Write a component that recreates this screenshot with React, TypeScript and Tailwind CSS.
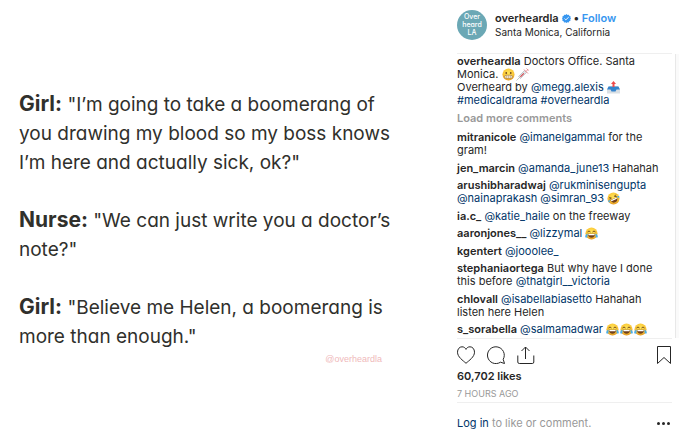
import type { ReactNode } from "react";

type EmojiKind = "grimace" | "rofl" | "joy" | "syringe" | "outbox";

const emojiLabels: Record<EmojiKind, string> = {
  grimace: "Grimacing face",
  rofl: "Rolling on the floor laughing",
  joy: "Face with tears of joy",
  syringe: "Syringe",
  outbox: "Outbox tray",
};

function Emoji({ kind }: { kind: EmojiKind }) {
  return (
    <svg viewBox="0 0 26 26" role="img" aria-label={emojiLabels[kind]} className="mr-px inline-block h-[13px] w-[13px] align-text-bottom">
      {(kind === "grimace" || kind === "rofl" || kind === "joy") && (
        <>
          <defs>
            <radialGradient id="face" cx="50%" cy="38%" r="62%">
              <stop offset="0" stopColor="#ffe45c" />
              <stop offset="0.65" stopColor="#fbc937" />
              <stop offset="1" stopColor="#e29420" />
            </radialGradient>
          </defs>
          <circle cx="13" cy="13" r="12" fill="url(#face)" />
        </>
      )}
      {kind === "grimace" && (
        <>
          <ellipse cx="8.5" cy="10" rx="1.7" ry="2.2" fill="#6b431a" />
          <ellipse cx="17.5" cy="10" rx="1.7" ry="2.2" fill="#6b431a" />
          <rect x="5" y="14.5" width="16" height="6" rx="3" fill="#fff" stroke="#9a6a22" strokeWidth="1.2" />
          <path d="M5 17.5h16M9 14.5v6M13 14.5v6M17 14.5v6" stroke="#b48a4a" strokeWidth="0.8" />
        </>
      )}
      {kind === "joy" && (
        <>
          <path d="M5 10q3-4 6 0M15 10q3-4 6 0" fill="none" stroke="#6b431a" strokeWidth="1.8" />
          <path d="M5.5 13.5h15q-1 8-7.500 8t-7.500-8z" fill="#71401c" />
          <path d="M6.500 14h13l-.6 2.500h-11.800z" fill="#fff" />
          <path d="M5 13c-4 2-5 5-4.500 7s4 2 4.500-1zM21 13c4 2 5 5 4.500 7s-4 2-4.500-1z" fill="#4caee8" />
        </>
      )}
      {kind === "rofl" && (
        <g transform="rotate(-25 13 13)">
          <path d="M5.500 8l4 2-4 2M20.500 8l-4 2 4 2" fill="none" stroke="#6b431a" strokeWidth="1.700" />
          <path d="M5.500 13.500h15q-1 8-7.500 8t-7.500-8z" fill="#71401c" />
          <path d="M6.500 14h13l-.6 2.500h-11.800z" fill="#fff" />
          <path d="M4.500 12c-3 0-4 2-3.500 3.500s3 1 3.500-1zM21.500 12c3 0 4 2 3.500 3.500s-3 1-3.500-1z" fill="#4caee8" />
        </g>
      )}
      {kind === "syringe" && (
        <>
          <path d="M1 25l7-7" stroke="#a2a8ad" strokeWidth="1.300" />
          <path d="M5 17L17 5l4 4L9 21z" fill="#dfe4e7" stroke="#9ba3a8" />
          <path d="M8 17l7-7 1.500 1.500-7 7z" fill="#d8434b" />
          <path d="M16 3l8 8M20 7l4-4M21 1l4 4" stroke="#e2757a" strokeWidth="1.600" />
        </>
      )}
      {kind === "outbox" && (
        <>
          <path d="M4 10h18l4 8v7H0v-7z" fill="#d9dfe4" />
          <path d="M3 11h20l3 6h-7l-2 4H9l-2-4H0z" fill="#3484cd" />
          <path d="M13 0l5 6h-3v6h-4V6H8z" fill="#ef4b4b" />
        </>
      )}
    </svg>
  );
}

function User({ children }: { children: ReactNode }) {
  return <a href="#user" className="font-semibold text-[#262626]">{children}</a>;
}

function Tag({ children }: { children: ReactNode }) {
  return <a href="#tag" className="text-[#003569]">{children}</a>;
}

function Speaker({ children }: { children: ReactNode }) {
  return <b className="text-[21px] leading-none font-bold">{children}</b>;
}

function Quote() {
  return (
    <main className="min-w-0 pt-[90px] pl-[19px] text-[19px] leading-[29px] text-[#30302c] [font-feature-settings:'cv11']">
      <p>
        <Speaker>Girl:</Speaker> "I’m going to take a boomerang of<br />
        you drawing my blood so my boss knows<br />
        I’m here and actually sick, ok?"
      </p>
      <p className="mt-[29px]">
        <Speaker>Nurse:</Speaker> "We can just write you a doctor’s<br />
        note?"
      </p>
      <p className="mt-[29px]">
        <Speaker>Girl:</Speaker> "Believe me Helen, a boomerang is<br />
        more than enough."
      </p>
      <p className="pr-[75px] text-right font-['Liberation_Sans_Narrow','Liberation_Sans',sans-serif] text-[9px] leading-4 text-[#efb9bb]">@overheardla</p>
    </main>
  );
}

function Header() {
  return (
    <header className="mr-[7px] flex h-[54px] gap-2 border-b border-[#efefef] pt-[10px]">
      <a href="#profile" aria-label="overheardla profile" className="flex h-[30px] w-[30px] flex-col items-center justify-center rounded-full bg-[#6ba8b5] text-[7px] leading-[8px] font-medium text-white [font-feature-settings:'cv11']">
        <span>Over</span>
        <span>heard</span>
        <span>LA</span>
      </a>
      <div className="pt-px">
        <div className="flex h-[14px] items-center text-[11px]">
          <a href="#profile" className="font-semibold">overheardla</a>
          <svg viewBox="0 0 20 20" role="img" aria-label="Verified" className="ml-[3px] h-[9px] w-[9px]">
            <path d="M10 0l2.400 2 3-.6 1 2.900 2.900 1-.6 3L20 10l-1.700 2.100.6 3-2.900 1-1 2.900-3-.6L10 20l-2.400-1.600-3 .6-1-2.900-2.900-1 .6-3L0 10l1.300-1.700-.6-3 2.900-1 1-2.900 3 .6z" fill="#3897f0" />
            <path d="M5.500 10l3 3L15 7" fill="none" stroke="#fff" strokeWidth="2" />
          </svg>
          <span className="mx-[3px] font-bold">•</span>
          <button type="button" className="font-semibold text-[#3897f0]">Follow</button>
        </div>
        <a href="#location" className="block text-[10px] leading-[14px]">Santa Monica, California</a>
      </div>
    </header>
  );
}

function Comments() {
  return (
    <section aria-label="Comments" className="flex h-[284px]">
      <div className="min-w-0 flex-1 pt-px">
        <p>
          <User>overheardla</User> Doctors Office. Santa<br />
          Monica. <Emoji kind="grimace" /><Emoji kind="syringe" /><br />
          Overheard by <Tag>@megg.alexis</Tag> <Emoji kind="outbox" /><br />
          <Tag>#medicaldrama</Tag> <Tag>#overheardla</Tag>
        </p>
        <button type="button" className="mt-[5px] block font-semibold text-[#999]">Load more comments</button>
        <ul className="mt-[6px] flex h-[205px] flex-col justify-between">
          <li><User>mitranicole</User> <Tag>@imanelgammal</Tag> for the<br />gram!</li>
          <li><User>jen_marcin</User> <Tag>@amanda_june13</Tag> Hahahah</li>
          <li><User>arushibharadwaj</User> <Tag>@rukminisengupta</Tag><br /><Tag>@nainaprakash</Tag> <Tag>@simran_93</Tag> <Emoji kind="rofl" /></li>
          <li><User>ia.c_</User> <Tag>@katie_haile</Tag> on the freeway</li>
          <li><User>aaronjones__</User> <Tag>@lizzymal</Tag> <Emoji kind="joy" /></li>
          <li><User>kgentert</User> <Tag>@jooolee_</Tag></li>
          <li><User>stephaniaortega</User> But why have I done<br />this before <Tag>@thatgirl__victoria</Tag></li>
          <li><User>chlovall</User> <Tag>@isabellabiasetto</Tag> Hahahah<br />listen here Helen</li>
          <li><User>s_sorabella</User> <Tag>@salmamadwar</Tag> <Emoji kind="joy" /><Emoji kind="joy" /><Emoji kind="joy" /></li>
        </ul>
      </div>
      <div className="w-1 border-l border-[#e8e8e8] bg-[#fafafa]" />
    </section>
  );
}

function Actions() {
  return (
    <footer className="mr-[7px] border-t border-[#efefef]">
      <div className="flex h-[31px] items-center gap-[12px] pt-px [&_svg]:fill-none [&_svg]:stroke-[#262626]">
        <button type="button" aria-label="Like">
          <svg viewBox="0 0 18 18" className="h-[18px] w-[18px]"><path d="M9 17.300C6 14.500.5 11 .5 6.200.5 3 2.500.8 5 .8c2 0 3.200 1 4 2.600C9.800 1.800 11 .8 13 .8c2.500 0 4.500 2.200 4.500 5.400C17.500 11 12 14.500 9 17.300z" /></svg>
        </button>
        <button type="button" aria-label="Comment">
          <svg viewBox="0 0 18 18" className="h-[18px] w-[18px]"><path d="M16.200 13.300A8.400 8.400 0 1 0 13.500 16.200l4 1.300z" strokeLinejoin="round" /></svg>
        </button>
        <button type="button" aria-label="Share">
          <svg viewBox="0 0 18 18" className="h-[18px] w-[18px]"><path d="M.8 9.500v6.500q0 1.500 1.500 1.500h13q1.500 0 1.500-1.500V9.500M8.500 13V1M4.500 5l4-4 4 4" /></svg>
        </button>
        <button type="button" aria-label="Save" className="ml-auto">
          <svg viewBox="0 0 16 18" className="h-[18px] w-[16px]"><path d="M1.500.5h13v17L8 11.500l-6.500 6z" /></svg>
        </button>
      </div>
      <p className="font-semibold">60,702 likes</p>
      <p className="mt-[4px] text-[9px] text-[#999]">7 HOURS AGO</p>
      <div className="mt-[2px] flex items-center justify-between border-t border-[#efefef] pt-[14px]">
        <p className="text-[#999]"><a href="#login" className="text-[#003569]">Log in</a> to like or comment.</p>
        <button type="button" aria-label="More options" className="mr-[2px] flex gap-[2px]">
          <span className="h-[3px] w-[3px] rounded-full bg-[#262626]" />
          <span className="h-[3px] w-[3px] rounded-full bg-[#262626]" />
          <span className="h-[3px] w-[3px] rounded-full bg-[#262626]" />
        </button>
      </div>
    </footer>
  );
}

export default function App() {
  return (
    <div className="grid min-h-screen grid-cols-[minmax(0,1fr)_222px] bg-white font-['Inter',sans-serif] text-[#262626]">
      <Quote />
      <article className="text-[11px] leading-[13px]">
        <Header />
        <Comments />
        <Actions />
      </article>
    </div>
  );
}
